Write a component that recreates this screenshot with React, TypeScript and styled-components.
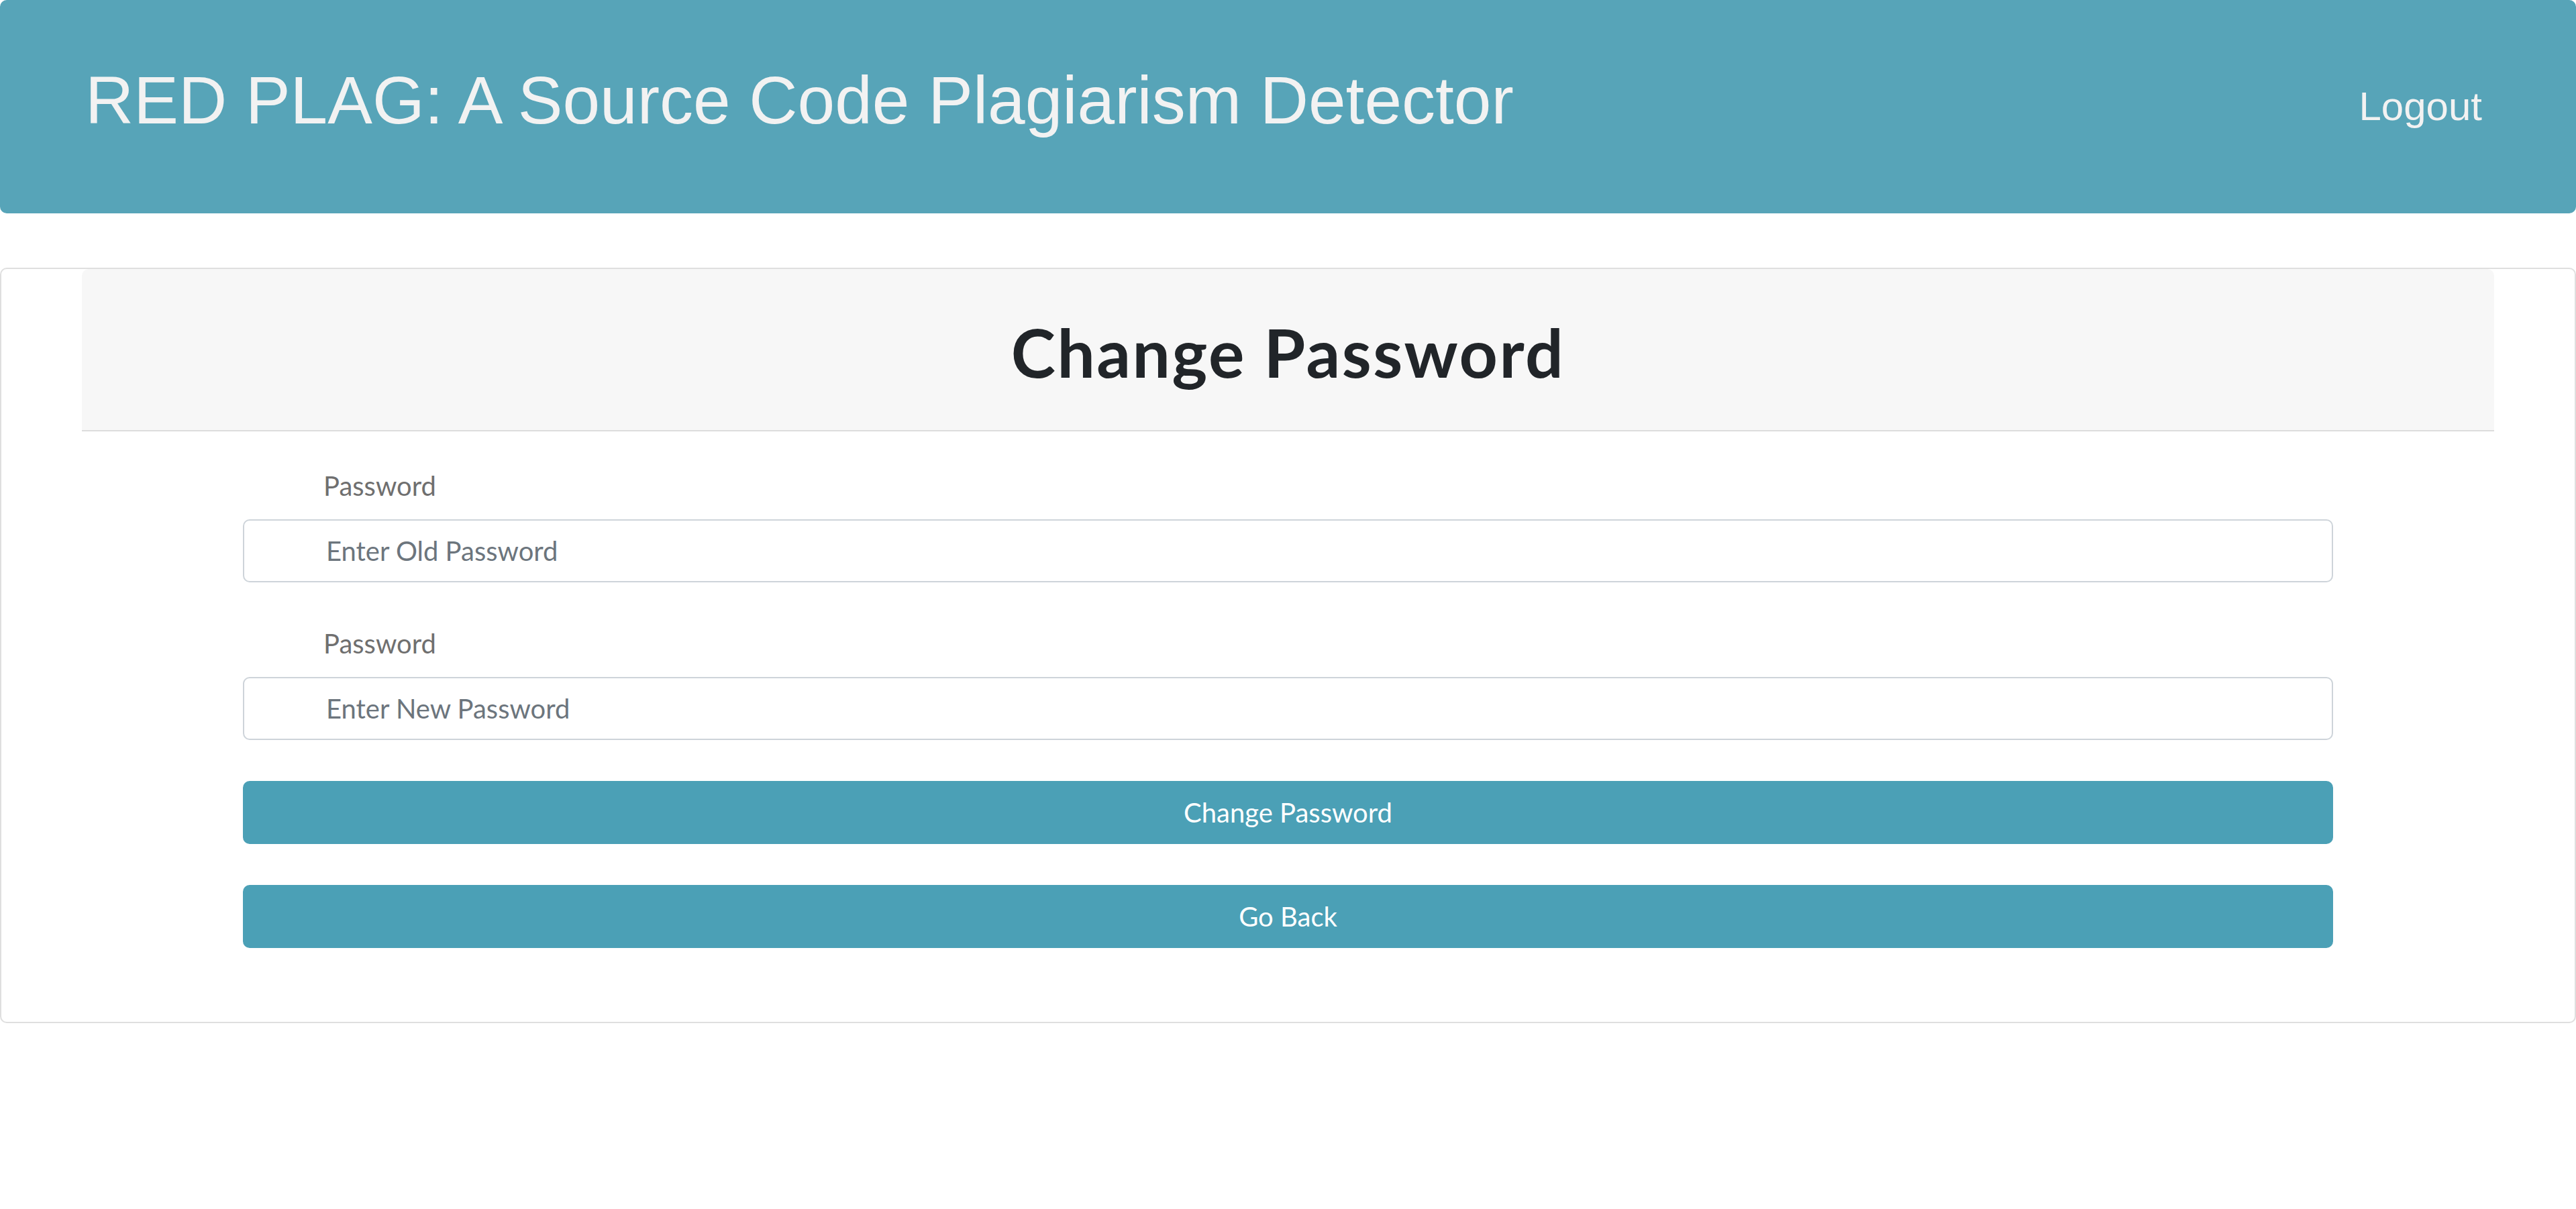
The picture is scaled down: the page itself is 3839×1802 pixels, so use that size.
import React from 'react';
import styled, { createGlobalStyle } from 'styled-components';

const GlobalStyle = createGlobalStyle`
  html,
  body {
    margin: 0;
    padding: 0;
    background: #ffffff;
  }

  body {
    font-family: Lato, 'Open Sans', sans-serif;
    color: #212529;
  }

  *,
  *::before,
  *::after {
    box-sizing: border-box;
  }
`;

const TopBar = styled.header`
  height: 318px;
  display: flex;
  align-items: center;
  justify-content: space-between;
  padding: 0 140px 0 127px;
  background: #57a4b8;
  border-radius: 10px;
`;

const Brand = styled.h1`
  margin: 0 0 20px;
  font-family: 'Liberation Sans', Arial, sans-serif;
  font-weight: 400;
  font-size: 100px;
  line-height: 1.2;
  color: #f2f2f2;
`;

const LogoutLink = styled.a`
  font-family: 'Liberation Sans', Arial, sans-serif;
  font-size: 60px;
  line-height: 1.5;
  color: #f2f2f2;
  text-decoration: none;
  cursor: pointer;
`;

const Card = styled.section`
  margin-top: 81px;
  padding: 0 120px 110px;
  border: 2px solid #dfdfdf;
  border-radius: 10px;
`;

const CardHeader = styled.div`
  padding: 63px 0 57px;
  background: #f7f7f7;
  border-bottom: 2px solid #dcdcdc;
  border-radius: 10px 10px 0 0;
  text-align: center;
`;

const Heading = styled.h2`
  margin: 0;
  font-size: 100px;
  font-weight: 700;
  line-height: 120px;
  letter-spacing: 2.5px;
  color: #212529;
`;

const Form = styled.form`
  display: flex;
  flex-direction: column;
  gap: 61px;
  padding: 51px 240px 0;
`;

const Field = styled.div`
  display: flex;
  flex-direction: column;
`;

const Label = styled.label`
  margin: 0 0 20px 120px;
  font-size: 40px;
  line-height: 60px;
  color: #6f6f6f;
`;

const Input = styled.input`
  height: 94px;
  padding: 0 30px 0 122px;
  font-family: inherit;
  font-size: 40px;
  color: #495057;
  background: #ffffff;
  border: 2px solid #ced4da;
  border-radius: 10px;
  outline: none;

  &::placeholder {
    color: #6c757d;
    opacity: 1;
  }
`;

const Button = styled.button`
  height: 94px;
  font-family: inherit;
  font-size: 40px;
  color: #ffffff;
  background: #4ba0b6;
  border: none;
  border-radius: 10px;
  cursor: pointer;
`;

export default function App() {
  return (
    <>
      <GlobalStyle />
      <TopBar>
        <Brand>RED PLAG: A Source Code Plagiarism Detector</Brand>
        <LogoutLink>Logout</LogoutLink>
      </TopBar>
      <Card>
        <CardHeader>
          <Heading>Change Password</Heading>
        </CardHeader>
        <Form onSubmit={(e) => e.preventDefault()}>
          <Field>
            <Label htmlFor="old-password">Password</Label>
            <Input id="old-password" type="password" placeholder="Enter Old Password" />
          </Field>
          <Field>
            <Label htmlFor="new-password">Password</Label>
            <Input id="new-password" type="password" placeholder="Enter New Password" />
          </Field>
          <Button type="submit">Change Password</Button>
          <Button type="button">Go Back</Button>
        </Form>
      </Card>
    </>
  );
}
